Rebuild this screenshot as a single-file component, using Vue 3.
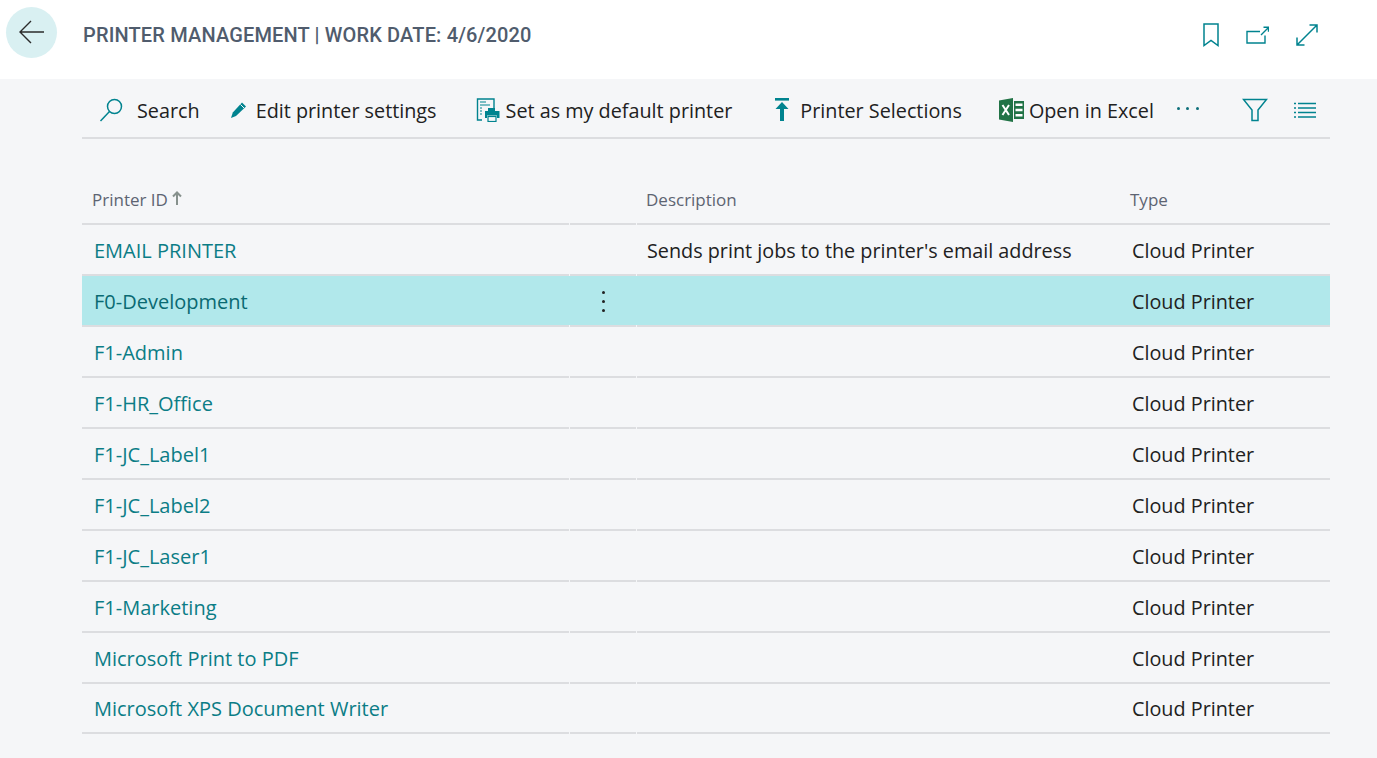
<script setup>
const rows = [
  { id: 'EMAIL PRINTER', desc: "Sends print jobs to the printer's email address" },
  { id: 'F0-Development', desc: '', selected: true },
  { id: 'F1-Admin', desc: '' },
  { id: 'F1-HR_Office', desc: '' },
  { id: 'F1-JC_Label1', desc: '' },
  { id: 'F1-JC_Label2', desc: '' },
  { id: 'F1-JC_Laser1', desc: '' },
  { id: 'F1-Marketing', desc: '' },
  { id: 'Microsoft Print to PDF', desc: '' },
  { id: 'Microsoft XPS Document Writer', desc: '', last: true }
]
</script>

<template>
  <div class="page">
    <header class="head">
      <button class="back" aria-label="Back">
        <svg width="28" height="28" viewBox="0 0 28 28" fill="none" stroke="#2b2b2b" stroke-width="1.4">
          <path d="M26 14H2M13 3 2 14l11 11" />
        </svg>
      </button>
      <h1 class="title">PRINTER MANAGEMENT | WORK DATE: 4/6/2020</h1>
      <div class="head-icons">
        <svg width="16" height="24" viewBox="0 0 16 24" fill="none" stroke="#00838f" stroke-width="1.5">
          <path d="M1 1h14v21.500L8 17.500 1 22.500z" />
        </svg>
        <svg width="23" height="18" viewBox="0 0 23 18" fill="none" stroke="#00838f" stroke-width="1.4">
          <path d="M19 9.500V17H1V5.500h13" />
          <path d="M15 9l7-7M17.500 1.200h5v4.500" />
        </svg>
        <svg width="22" height="22" viewBox="0 0 22 22" fill="none" stroke="#00838f" stroke-width="1.5">
          <path d="M1 21 21 1M13.500 1H21v7.500M1 13.500V21h7.500" />
        </svg>
      </div>
    </header>

    <main class="content">
      <nav class="toolbar">
        <span class="tool tool-search">
          <svg width="26" height="26" viewBox="0 0 26 26" fill="none" stroke="#00838f" stroke-width="1.5">
            <circle cx="15.500" cy="9.500" r="7" />
            <path d="M10.500 14.500 1.500 24" />
          </svg>
          Search
        </span>
        <span class="tool tool-edit">
          <svg width="17" height="18" viewBox="0 0 17 18">
            <path fill="#00838f" d="M12 1.500 16 5.500 6 15 1 17l1.800-5.500z" />
            <path stroke="#f5f6f8" stroke-width="1" d="M10.500 3.500l3.500 3.500" />
          </svg>
          Edit printer settings
        </span>
        <span class="tool tool-default">
          <svg width="24" height="24" viewBox="0 0 24 24" fill="none" stroke="#00838f" stroke-width="1.200">
            <path d="M16 1H1.500v21H6M16 1h2v9" stroke-width="1.400" />
            <path d="M4 4h6M4 7h10M4 10h2M4 13h2M4 16h2" />
            <path fill="#00838f" stroke="none" d="M9 13h3v-3h7v3h4.500v7H21v-2.500H11V20H9z" />
            <rect x="12" y="18.500" width="8" height="5" />
          </svg>
          Set as my default printer
        </span>
        <span class="tool tool-select">
          <svg width="16" height="24" viewBox="0 0 16 24" fill="#00838f">
            <rect x="1" y="0" width="14" height="2.600" />
            <path d="M8 4 14.500 11H10v12H6V11H1.500z" />
          </svg>
          Printer Selections
        </span>
        <span class="tool tool-excel">
          <svg width="25" height="24" viewBox="0 0 25 24">
            <path fill="#217346" d="M0 2.500 14 0v24L0 21.500z" />
            <path fill="#217346" d="M15 3h10v18H15z" />
            <path fill="#fff" d="M16.500 5.500h7v2.500h-7zM16.500 10.700h7v2.500h-7zM16.500 16h7v2.500h-7z" />
            <path fill="none" stroke="#fff" stroke-width="2" d="M3.500 7l6.500 10M10 7 3.500 17" />
          </svg>
          Open in Excel
        </span>
        <span class="more"><i></i><i></i><i></i></span>
        <span class="spacer"></span>
        <svg class="filter" width="26" height="24" viewBox="0 0 26 24" fill="none" stroke="#00838f" stroke-width="1.500">
          <path d="M1.500 1.500h23l-8.500 10.500V22.500h-6V12z" />
        </svg>
        <svg class="list" width="22" height="16" viewBox="0 0 22 16" stroke="#00838f" stroke-width="1.400">
          <path d="M0 1.500h2M4 1.500h18M0 6h2M4 6h18M0 10.500h2M4 10.500h18M0 15h2M4 15h18" />
        </svg>
      </nav>

      <section class="table">
        <div class="row row-head">
          <div class="cell c-id">Printer ID<span class="sort">
            <svg width="10" height="14" viewBox="0 0 10 14" fill="none" stroke="#87918d" stroke-width="2"><path d="M5 14V2M1 5.500 5 1.500l4 4" /></svg>
          </span></div>
          <div class="cell c-menu"></div>
          <div class="cell c-desc">Description</div>
          <div class="cell c-type">Type</div>
        </div>
        <div v-for="r in rows" :key="r.id" class="row" :class="{ selected: r.selected, last: r.last }">
          <div class="cell c-id"><a class="link">{{ r.id }}</a></div>
          <div class="cell c-menu"><span v-if="r.selected" class="dots"><i></i><i></i><i></i></span></div>
          <div class="cell c-desc">{{ r.desc }}</div>
          <div class="cell c-type">Cloud Printer</div>
        </div>
      </section>
    </main>
  </div>
</template>

<style scoped>
.page {
  width: 1377px;
  height: 758px;
  overflow: hidden;
  background: #f5f6f8;
  font-family: "Open Sans", "Noto Sans", sans-serif;
  color: #212121;
}
.head {
  height: 79px;
  background: #fff;
  display: flex;
  align-items: center;
  padding: 0 59px 0 6px;
  box-sizing: border-box;
}
.back {
  width: 51px;
  height: 51px;
  margin-top: -15px;
  border: 0;
  padding: 0;
  border-radius: 50%;
  background: #d9f0f2;
  display: flex;
  align-items: center;
  justify-content: center;
}
.title {
  margin: -10px 0 0 26px;
  font: 500 20px "Roboto", sans-serif;
  letter-spacing: 0.15px;
  color: #505c6d;
}
.head-icons {
  margin-left: auto;
  margin-top: -10px;
  display: flex;
  align-items: center;
  gap: 27px;
}
.content {
  padding: 0 47px 0 82px;
}
.toolbar {
  height: 60px;
  padding-top: 5px;
  display: flex;
  align-items: center;
  border-bottom: 2px solid #dcdde0;
  box-sizing: border-box;
  font-size: 19.8px;
}
.tool {
  display: flex;
  align-items: center;
  white-space: nowrap;
}
.tool svg { margin-top: -2px; }
.tool-search { margin-left: 17px; gap: 12px; }
.tool-edit { margin-left: 30px; gap: 9px; }
.tool-default { margin-left: 39px; gap: 6px; }
.tool-select { margin-left: 42px; gap: 10px; }
.tool-excel { margin-left: 37px; gap: 5px; }
.more {
  display: flex;
  gap: 6.500px;
  margin-left: 23px;
  margin-top: -4px;
}
.more i {
  width: 3px;
  height: 3px;
  border-radius: 50%;
  background: #0e6f7a;
}
.spacer { flex: 1; }
.filter { margin-right: 26px; margin-top: -2px; }
.list { margin-right: 14px; margin-top: -2px; }
.table {
  margin-top: 34px;
}
.row {
  display: grid;
  grid-template-columns: 487px 68px 483px 210px;
  height: 51px;
  padding-top: 2px;
  box-sizing: border-box;
  border-bottom: 2px solid #dcdde0;
  font-size: 20px;
}
.row.selected { background: #b1e8eb; }
.row.last { height: 50px; padding-top: 0; }
.row-head {
  height: 52px;
  font-size: 17px;
  color: #5d6472;
}
.cell {
  display: flex;
  align-items: center;
  white-space: nowrap;
  min-width: 0;
}
.c-id { padding-left: 12px; }
.row-head .c-id { padding-left: 10px; }
.c-menu { position: relative; }
.c-menu::before,
.c-menu::after {
  content: "";
  position: absolute;
  bottom: -2px;
  width: 1px;
  height: 2px;
  background: #f5f6f8;
}
.c-menu::before { left: 0; }
.c-menu::after { right: 0; }
.c-desc { padding-left: 10px; font-size: 19.8px; }
.row-head .c-desc { padding-left: 9px; font-size: 17px; }
.c-type { padding-left: 12px; font-size: 19.8px; }
.row-head .c-type { padding-left: 10px; font-size: 17px; }
.sort { margin-left: 4px; display: flex; margin-top: -3px; }
.link { color: #0b7d86; }
.selected .link { color: #0a6a72; }
.dots {
  display: flex;
  flex-direction: column;
  gap: 6px;
  margin-left: 33px;
}
.dots i {
  width: 3px;
  height: 3px;
  border-radius: 50%;
  background: #222;
}
</style>
